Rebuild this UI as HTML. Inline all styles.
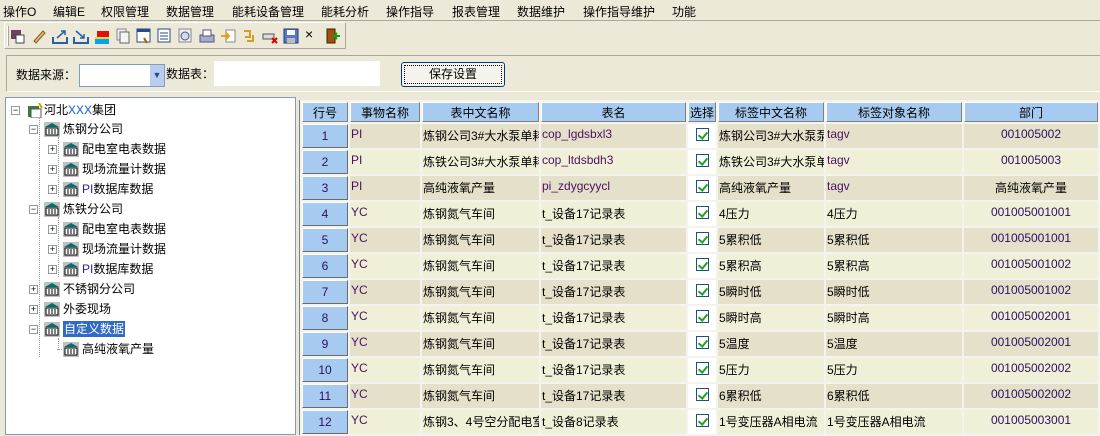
<!DOCTYPE html>
<html><head><meta charset="utf-8"><style>
*{margin:0;padding:0;box-sizing:border-box}
body{width:1100px;height:435px;overflow:hidden;background:#ece9d8;font:12px "Liberation Sans","Noto Sans CJK SC",sans-serif;position:relative;color:#000}
.a{position:absolute}
.menu span{position:absolute;top:3px}
.tb{left:4px;top:22px;width:342px;height:27px;border:1px solid;border-color:#fff #aca899 #aca899 #fff}
.ic{position:absolute;top:5px;width:16px;height:16px}
.tree{left:5px;top:97px;width:291px;height:338px;background:#fff;border:1px solid #7f9db9}
.ti{position:absolute;height:16px;line-height:16px;white-space:nowrap}
.ex{position:absolute;width:9px;height:9px;border:1px solid #919b9c;background:#fff;font-size:9px;line-height:7px;text-align:center;color:#000}
.bank{position:absolute;width:16px;height:15px}
table{position:absolute;left:300px;top:100px;width:800px;border-collapse:separate;border-spacing:2px;table-layout:fixed;background:#f4f3ee}
td,th{height:24px;padding:0 1px;overflow:hidden;white-space:nowrap;vertical-align:top;padding-top:3px;font-weight:normal}
th{height:19px;background:#a6caf0;border:1px solid;border-color:#fff #808080 #808080 #fff;padding-top:1px;text-align:center}
td.n{background:#a6caf0;border:1px solid;border-color:#fff #6a6a6a #6a6a6a #fff;text-align:center;color:#2a1060;vertical-align:middle;padding:0}
tr.o td{background:#e5e0ca}
tr.e td{background:#f0f0d8}
tr td.n{background:#a6caf0}
tr td.c{background:#fff;text-align:center;vertical-align:top;padding-top:4px}
.cb{display:inline-block;width:13px;height:13px;border:1px solid #1c5180;background:#fff;position:relative}
.cb:after{content:"";position:absolute;left:3px;top:1px;width:4px;height:7px;border:solid #21a121;border-width:0 2px 2px 0;transform:rotate(40deg)}
.pu{color:#4b1060}
td.d{text-align:center;color:#2a1060}
</style></head><body>
<div class="a menu" style="left:0;top:0;width:1100px;height:20px">
<span style="left:3px">操作O</span><span style="left:53px">编辑E</span><span style="left:101px">权限管理</span><span style="left:166px">数据管理</span><span style="left:232px">能耗设备管理</span><span style="left:321px">能耗分析</span><span style="left:386px">操作指导</span><span style="left:452px">报表管理</span><span style="left:517px">数据维护</span><span style="left:583px">操作指导维护</span><span style="left:672px">功能</span>
</div>
<div class="a" style="left:0;top:20px;width:1100px;height:1px;background:#aca899"></div>
<div class="a tb">
<div class="a" style="left:2px;top:3px;width:2px;height:20px;border-left:1px solid #fff;border-right:1px solid #aca899"></div>
<svg class="ic" style="left:5px" viewBox="0 0 16 16"><rect x="1" y="2" width="10" height="9" fill="#6b4060"/><rect x="6" y="7" width="8" height="8" fill="#fff" stroke="#444"/></svg>
<svg class="ic" style="left:26px" viewBox="0 0 16 16"><path d="M3 13L12 3l2 2-9 10z" fill="#e8b860" stroke="#806030"/></svg>
<svg class="ic" style="left:47px" viewBox="0 0 16 16"><path d="M1 9v6h14V9" fill="none" stroke="#2b5ea8" stroke-width="2"/><path d="M5 10L13 3M9 3h4v4" fill="none" stroke="#2b5ea8" stroke-width="1.5"/></svg>
<svg class="ic" style="left:68px" viewBox="0 0 16 16"><path d="M1 9v6h14V9" fill="none" stroke="#2b5ea8" stroke-width="2"/><path d="M3 3l8 7M11 6v4H7" fill="none" stroke="#2b5ea8" stroke-width="1.5"/></svg>
<svg class="ic" style="left:89px" viewBox="0 0 16 16"><rect x="1" y="10" width="14" height="6" fill="#00a0ff"/><rect x="3" y="3" width="12" height="7" fill="#e01010"/><rect x="1" y="9" width="14" height="2" fill="#f0e000"/></svg>
<svg class="ic" style="left:110px" viewBox="0 0 16 16"><rect x="2" y="1" width="9" height="11" fill="#eee" stroke="#888"/><rect x="5" y="4" width="9" height="11" fill="#f4f4f4" stroke="#666"/></svg>
<svg class="ic" style="left:131px" viewBox="0 0 16 16"><rect x="1" y="1" width="13" height="13" fill="#fff" stroke="#2b4a80"/><rect x="1" y="1" width="13" height="3" fill="#2b4a80"/><path d="M8 10l3 5" stroke="#a06000" stroke-width="2"/></svg>
<svg class="ic" style="left:152px" viewBox="0 0 16 16"><rect x="1" y="1" width="12" height="13" fill="#fff" stroke="#2b4a80"/><path d="M3 5h8M3 8h8M3 11h8" stroke="#2b4a80"/></svg>
<svg class="ic" style="left:173px" viewBox="0 0 16 16"><rect x="1" y="1" width="12" height="13" fill="#eee" stroke="#888"/><circle cx="7" cy="8" r="4" fill="#cde" stroke="#557"/></svg>
<svg class="ic" style="left:194px" viewBox="0 0 16 16"><rect x="1" y="7" width="14" height="7" fill="#aac" stroke="#557"/><rect x="4" y="2" width="8" height="6" fill="#fff" stroke="#557"/></svg>
<svg class="ic" style="left:215px" viewBox="0 0 16 16"><rect x="6" y="2" width="9" height="12" fill="#fff" stroke="#888"/><path d="M1 8h8M6 5l3 3-3 3" stroke="#e0a020" stroke-width="2" fill="none"/></svg>
<svg class="ic" style="left:236px" viewBox="0 0 16 16"><path d="M3 3h6v6H4M12 7v6H6" stroke="#d0a020" stroke-width="2" fill="none"/></svg>
<svg class="ic" style="left:257px" viewBox="0 0 16 16"><rect x="1" y="6" width="11" height="5" fill="#ddd" stroke="#555"/><path d="M10 10l5 5M15 10l-5 5" stroke="#e00000" stroke-width="2"/></svg>
<svg class="ic" style="left:278px" viewBox="0 0 16 16"><rect x="1" y="1" width="14" height="14" fill="#5a78c8" stroke="#203870"/><rect x="4" y="2" width="8" height="5" fill="#fff"/><rect x="4" y="10" width="8" height="5" fill="#bbb"/></svg>
<div class="a" style="left:300px;top:3px;font-size:14px">×</div>
<svg class="ic" style="left:320px" viewBox="0 0 16 16"><rect x="2" y="1" width="8" height="14" fill="#a05010" stroke="#402000"/><path d="M9 8h6M12 5l-3 3 3 3" stroke="#10a010" stroke-width="2" fill="none"/></svg>
</div>
<div class="a" style="left:6px;top:55px;width:1100px;height:37px;border:1px solid;border-color:#aca899 #fff #fff #aca899"></div>
<div class="a" style="left:16px;top:66px">数据来源：</div>
<div class="a" style="left:79px;top:64px;width:86px;height:23px;border:1px solid #7f9db9;background:#fff"><div class="a" style="right:0;top:0;width:15px;height:21px;background:#b8cdf0;border-left:1px solid #fff;color:#2b4a80;font-size:9px;text-align:center;line-height:21px">▼</div></div>
<div class="a" style="left:166px;top:65px">数据表：</div>
<div class="a" style="left:214px;top:61px;width:166px;height:25px;background:#fff"></div>
<div class="a" style="left:401px;top:62px;width:104px;height:25px;border:1px solid #003c74;border-radius:3px;background:#f4f3ee;text-align:center;line-height:22px"><div class="a" style="left:2px;top:2px;right:2px;bottom:2px;border:1px dotted #000"></div>保存设置</div>
<div class="a tree">
<div class="a" style="left:33px;top:19px;width:0;height:240px;border-left:1px dotted #999"></div>
<div class="a" style="left:52px;top:39px;width:0;height:60px;border-left:1px dotted #999"></div>
<div class="a" style="left:52px;top:119px;width:0;height:60px;border-left:1px dotted #999"></div>
<div class="a" style="left:52px;top:240px;width:0;height:12px;border-left:1px dotted #999"></div>
<div class="ex" style="left:5px;top:8px">−</div><svg class="bank" style="left:22px;top:5px" viewBox="0 0 16 15"><rect x="0" y="3" width="11" height="11" fill="#3c7a40"/><rect x="3" y="6" width="10" height="9" fill="#fff" stroke="#555"/><path d="M11 0l3 5" stroke="#d0a000" stroke-width="2"/></svg><div class="ti" style="left:38px;top:4px">河北<span style="color:#1060d0">XXX</span>集团</div>
</div>
<div class="a" style="left:296px;top:97px;width:4px;height:338px;background:#ece9d8"></div>
<div class="a" style="left:299px;top:97px;width:2px;height:338px;background:#808080"></div>
<div class="a" style="left:296px;top:97px;width:804px;height:3px;background:#ece9d8"></div>
<table>
<colgroup><col style="width:46px"><col style="width:70px"><col style="width:117px"><col style="width:145px"><col style="width:28px"><col style="width:106px"><col style="width:136px"><col style="width:134px"></colgroup>
<tr><th>行号</th><th>事物名称</th><th>表中文名称</th><th>表名</th><th>选择</th><th>标签中文名称</th><th>标签对象名称</th><th>部门</th></tr>
<tr class="o"><td class="n">1</td><td class="pu">PI</td><td>炼钢公司3#大水泵单耗</td><td class="pu">cop_lgdsbxl3</td><td class="c"><i class="cb"></i></td><td>炼钢公司3#大水泵泵</td><td class="pu">tagv</td><td class="d">001005002</td></tr>
<tr class="e"><td class="n">2</td><td class="pu">PI</td><td>炼铁公司3#大水泵单耗</td><td class="pu">cop_ltdsbdh3</td><td class="c"><i class="cb"></i></td><td>炼铁公司3#大水泵单</td><td class="pu">tagv</td><td class="d">001005003</td></tr>
<tr class="o"><td class="n">3</td><td class="pu">PI</td><td>高纯液氧产量</td><td class="pu">pi_zdygcyycl</td><td class="c"><i class="cb"></i></td><td>高纯液氧产量</td><td class="pu">tagv</td><td class="d" style="color:#000">高纯液氧产量</td></tr>
<tr class="e"><td class="n">4</td><td class="pu">YC</td><td>炼钢氮气车间</td><td>t_设备17记录表</td><td class="c"><i class="cb"></i></td><td>4压力</td><td>4压力</td><td class="d">001005001001</td></tr>
<tr class="o"><td class="n">5</td><td class="pu">YC</td><td>炼钢氮气车间</td><td>t_设备17记录表</td><td class="c"><i class="cb"></i></td><td>5累积低</td><td>5累积低</td><td class="d">001005001001</td></tr>
<tr class="e"><td class="n">6</td><td class="pu">YC</td><td>炼钢氮气车间</td><td>t_设备17记录表</td><td class="c"><i class="cb"></i></td><td>5累积高</td><td>5累积高</td><td class="d">001005001002</td></tr>
<tr class="o"><td class="n">7</td><td class="pu">YC</td><td>炼钢氮气车间</td><td>t_设备17记录表</td><td class="c"><i class="cb"></i></td><td>5瞬时低</td><td>5瞬时低</td><td class="d">001005001002</td></tr>
<tr class="e"><td class="n">8</td><td class="pu">YC</td><td>炼钢氮气车间</td><td>t_设备17记录表</td><td class="c"><i class="cb"></i></td><td>5瞬时高</td><td>5瞬时高</td><td class="d">001005002001</td></tr>
<tr class="o"><td class="n">9</td><td class="pu">YC</td><td>炼钢氮气车间</td><td>t_设备17记录表</td><td class="c"><i class="cb"></i></td><td>5温度</td><td>5温度</td><td class="d">001005002001</td></tr>
<tr class="e"><td class="n">10</td><td class="pu">YC</td><td>炼钢氮气车间</td><td>t_设备17记录表</td><td class="c"><i class="cb"></i></td><td>5压力</td><td>5压力</td><td class="d">001005002002</td></tr>
<tr class="o"><td class="n">11</td><td class="pu">YC</td><td>炼钢氮气车间</td><td>t_设备17记录表</td><td class="c"><i class="cb"></i></td><td>6累积低</td><td>6累积低</td><td class="d">001005002002</td></tr>
<tr class="e"><td class="n">12</td><td class="pu">YC</td><td>炼钢3、4号空分配电室</td><td>t_设备8记录表</td><td class="c"><i class="cb"></i></td><td>1号变压器A相电流</td><td>1号变压器A相电流</td><td class="d">001005003001</td></tr>
</table>
<div class="a" style="left:5px;top:97px;width:291px;height:338px">
<div class="ex" style="left:24px;top:28px">−</div><svg class="bank" style="left:39px;top:25px" viewBox="0 0 16 15"><rect width="16" height="15" fill="#c0c0c0"/><path d="M1 5L8 1l7 4z" fill="#007070"/><rect x="2" y="6" width="12" height="7" fill="#fff" stroke="#000"/><path d="M5 7v5M8 7v5M11 7v5" stroke="#000"/></svg><div class="ti" style="left:58px;top:24px">炼钢分公司</div>
<div class="ex" style="left:43px;top:48px">+</div><svg class="bank" style="left:58px;top:45px" viewBox="0 0 16 15"><rect width="16" height="15" fill="#c0c0c0"/><path d="M1 5L8 1l7 4z" fill="#007070"/><rect x="2" y="6" width="12" height="7" fill="#fff" stroke="#000"/><path d="M5 7v5M8 7v5M11 7v5" stroke="#000"/></svg><div class="ti" style="left:77px;top:44px">配电室电表数据</div>
<div class="ex" style="left:43px;top:68px">+</div><svg class="bank" style="left:58px;top:65px" viewBox="0 0 16 15"><rect width="16" height="15" fill="#c0c0c0"/><path d="M1 5L8 1l7 4z" fill="#007070"/><rect x="2" y="6" width="12" height="7" fill="#fff" stroke="#000"/><path d="M5 7v5M8 7v5M11 7v5" stroke="#000"/></svg><div class="ti" style="left:77px;top:64px">现场流量计数据</div>
<div class="ex" style="left:43px;top:88px">+</div><svg class="bank" style="left:58px;top:85px" viewBox="0 0 16 15"><rect width="16" height="15" fill="#c0c0c0"/><path d="M1 5L8 1l7 4z" fill="#007070"/><rect x="2" y="6" width="12" height="7" fill="#fff" stroke="#000"/><path d="M5 7v5M8 7v5M11 7v5" stroke="#000"/></svg><div class="ti" style="left:77px;top:84px"><span style="color:#2020c0">PI</span>数据库数据</div>
<div class="ex" style="left:24px;top:108px">−</div><svg class="bank" style="left:39px;top:105px" viewBox="0 0 16 15"><rect width="16" height="15" fill="#c0c0c0"/><path d="M1 5L8 1l7 4z" fill="#007070"/><rect x="2" y="6" width="12" height="7" fill="#fff" stroke="#000"/><path d="M5 7v5M8 7v5M11 7v5" stroke="#000"/></svg><div class="ti" style="left:58px;top:104px">炼铁分公司</div>
<div class="ex" style="left:43px;top:128px">+</div><svg class="bank" style="left:58px;top:125px" viewBox="0 0 16 15"><rect width="16" height="15" fill="#c0c0c0"/><path d="M1 5L8 1l7 4z" fill="#007070"/><rect x="2" y="6" width="12" height="7" fill="#fff" stroke="#000"/><path d="M5 7v5M8 7v5M11 7v5" stroke="#000"/></svg><div class="ti" style="left:77px;top:124px">配电室电表数据</div>
<div class="ex" style="left:43px;top:148px">+</div><svg class="bank" style="left:58px;top:145px" viewBox="0 0 16 15"><rect width="16" height="15" fill="#c0c0c0"/><path d="M1 5L8 1l7 4z" fill="#007070"/><rect x="2" y="6" width="12" height="7" fill="#fff" stroke="#000"/><path d="M5 7v5M8 7v5M11 7v5" stroke="#000"/></svg><div class="ti" style="left:77px;top:144px">现场流量计数据</div>
<div class="ex" style="left:43px;top:168px">+</div><svg class="bank" style="left:58px;top:165px" viewBox="0 0 16 15"><rect width="16" height="15" fill="#c0c0c0"/><path d="M1 5L8 1l7 4z" fill="#007070"/><rect x="2" y="6" width="12" height="7" fill="#fff" stroke="#000"/><path d="M5 7v5M8 7v5M11 7v5" stroke="#000"/></svg><div class="ti" style="left:77px;top:164px"><span style="color:#2020c0">PI</span>数据库数据</div>
<div class="ex" style="left:24px;top:188px">+</div><svg class="bank" style="left:39px;top:185px" viewBox="0 0 16 15"><rect width="16" height="15" fill="#c0c0c0"/><path d="M1 5L8 1l7 4z" fill="#007070"/><rect x="2" y="6" width="12" height="7" fill="#fff" stroke="#000"/><path d="M5 7v5M8 7v5M11 7v5" stroke="#000"/></svg><div class="ti" style="left:58px;top:184px">不锈钢分公司</div>
<div class="ex" style="left:24px;top:208px">+</div><svg class="bank" style="left:39px;top:205px" viewBox="0 0 16 15"><rect width="16" height="15" fill="#c0c0c0"/><path d="M1 5L8 1l7 4z" fill="#007070"/><rect x="2" y="6" width="12" height="7" fill="#fff" stroke="#000"/><path d="M5 7v5M8 7v5M11 7v5" stroke="#000"/></svg><div class="ti" style="left:58px;top:204px">外委现场</div>
<div class="ex" style="left:24px;top:228px">−</div><svg class="bank" style="left:39px;top:225px" viewBox="0 0 16 15"><rect width="16" height="15" fill="#c0c0c0"/><path d="M1 5L8 1l7 4z" fill="#007070"/><rect x="2" y="6" width="12" height="7" fill="#fff" stroke="#000"/><path d="M5 7v5M8 7v5M11 7v5" stroke="#000"/></svg><div class="ti" style="left:58px;top:224px;background:#316ac5;color:#fff;padding:0 1px">自定义数据</div>
<div class="a" style="left:52px;top:252px;width:7px;border-top:1px dotted #999"></div>
<svg class="bank" style="left:58px;top:245px" viewBox="0 0 16 15"><rect width="16" height="15" fill="#c0c0c0"/><path d="M1 5L8 1l7 4z" fill="#007070"/><rect x="2" y="6" width="12" height="7" fill="#fff" stroke="#000"/><path d="M5 7v5M8 7v5M11 7v5" stroke="#000"/></svg><div class="ti" style="left:77px;top:244px">高纯液氧产量</div>
</div>
</body></html>
